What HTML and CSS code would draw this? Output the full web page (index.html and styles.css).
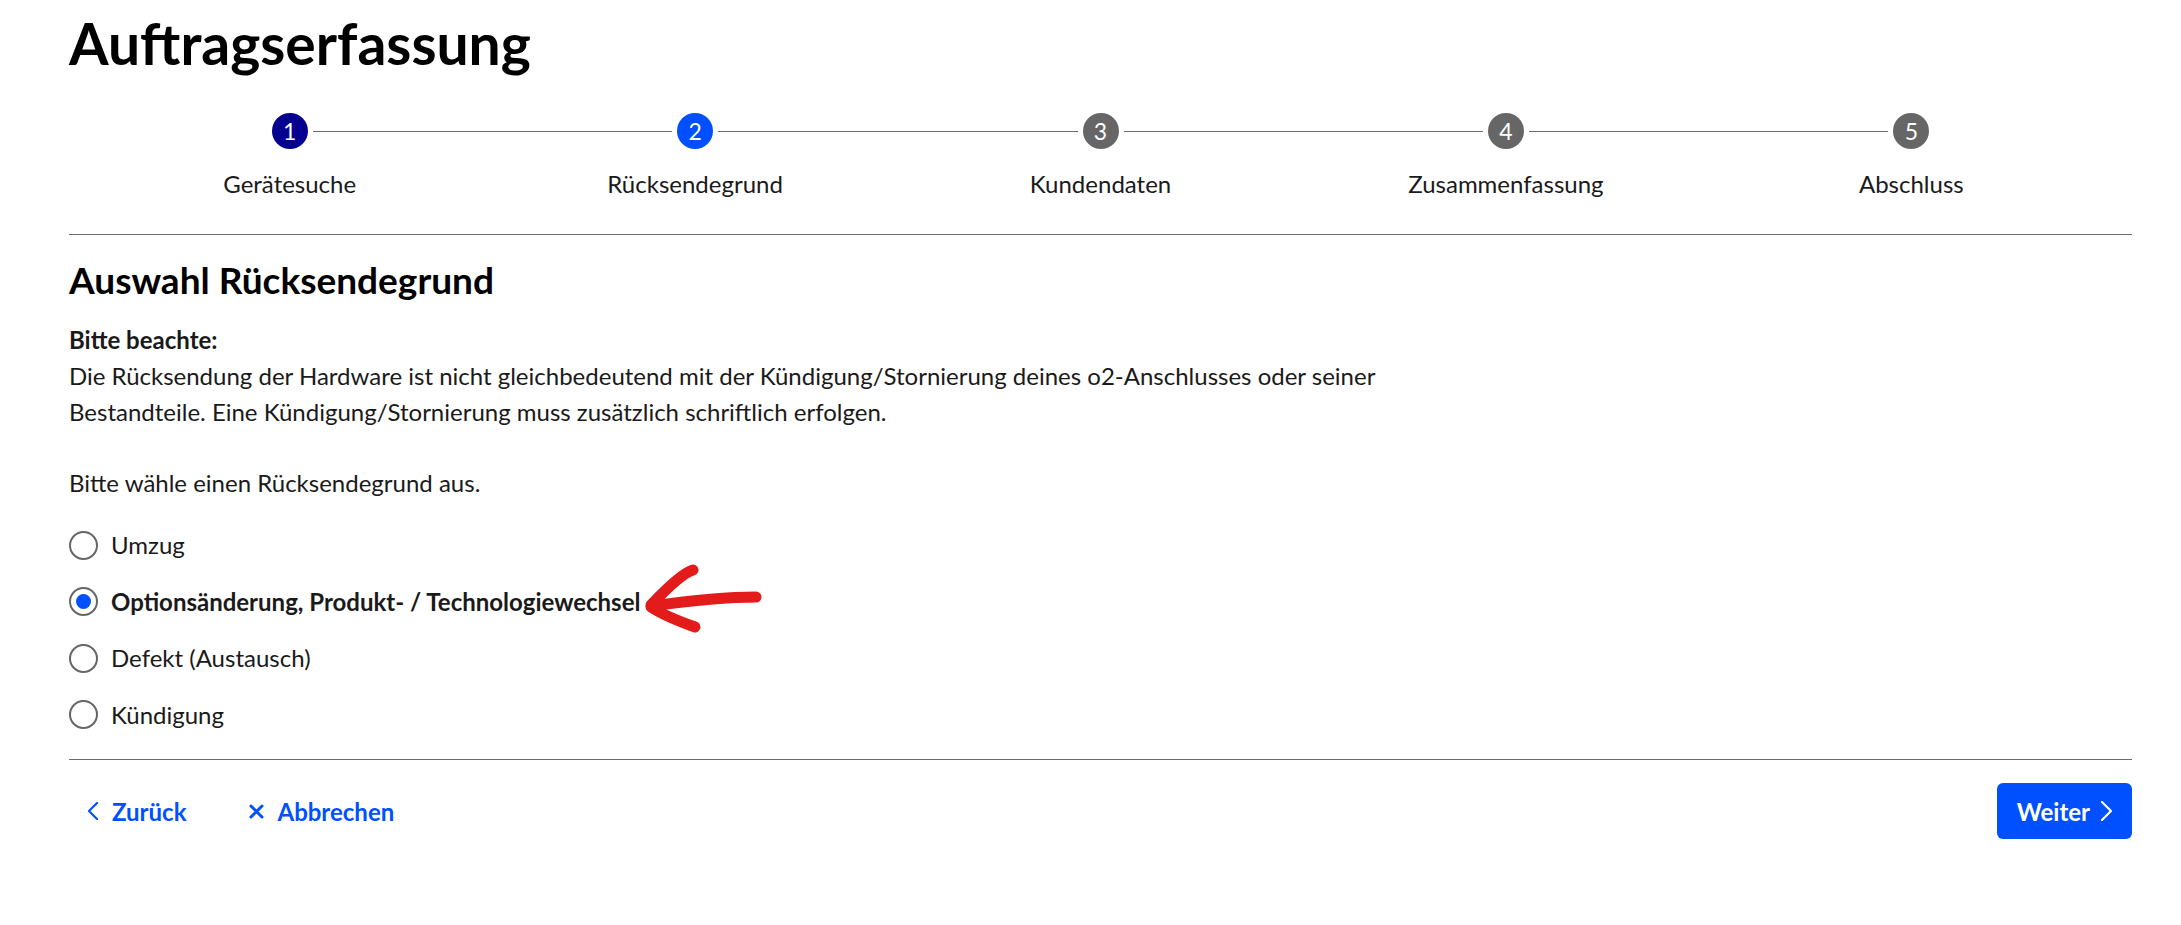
FILE: index.html
```html
<!DOCTYPE html>
<html lang="de">
<head>
    <meta charset="UTF-8">
    <meta name="viewport" content="width=device-width, initial-scale=1.0">
    <title>Auftragserfassung</title>
    <link rel="stylesheet" href="styles.css">
</head>
<body>
    <div class="page">
        <h1>Auftragserfassung</h1>

        <div class="stepper">
            <div class="step done">
                <div class="step-num">1</div>
                <div class="step-label">Gerätesuche</div>
            </div>
            <div class="step active">
                <div class="step-num">2</div>
                <div class="step-label">Rücksendegrund</div>
            </div>
            <div class="step">
                <div class="step-num">3</div>
                <div class="step-label">Kundendaten</div>
            </div>
            <div class="step">
                <div class="step-num">4</div>
                <div class="step-label">Zusammenfassung</div>
            </div>
            <div class="step last">
                <div class="step-num">5</div>
                <div class="step-label">Abschluss</div>
            </div>
        </div>

        <hr class="divider">

        <h2>Auswahl Rücksendegrund</h2>

        <div class="notice">
            <strong>Bitte beachte:</strong>
            <p>Die Rücksendung der Hardware ist nicht gleichbedeutend mit der Kündigung/Stornierung deines o2-Anschlusses oder seiner<br>Bestandteile. Eine Kündigung/Stornierung muss zusätzlich schriftlich erfolgen.</p>
        </div>

        <p class="prompt">Bitte wähle einen Rücksendegrund aus.</p>

        <div class="options">
            <label class="option">
                <input type="radio" name="reason" value="umzug">
                <span class="option-text">Umzug</span>
            </label>
            <label class="option selected">
                <input type="radio" name="reason" value="wechsel" checked>
                <span class="option-text">Optionsänderung, Produkt- / Technologiewechsel
                    <svg class="arrow" width="130" height="90" viewBox="0 0 130 90">
                        <path d="M118 40 C 90 40, 50 44, 14 49" />
                        <path d="M55 13 C 45 16, 30 30, 13 48" />
                        <path d="M13 50 C 25 58, 40 64, 57 70" />
                    </svg>
                </span>
            </label>
            <label class="option">
                <input type="radio" name="reason" value="defekt">
                <span class="option-text">Defekt (Austausch)</span>
            </label>
            <label class="option">
                <input type="radio" name="reason" value="kuendigung">
                <span class="option-text">Kündigung</span>
            </label>
        </div>

        <hr class="divider bottom">

        <div class="actions">
            <div class="actions-left">
                <a href="#" class="link">
                    <svg width="12" height="18" viewBox="0 0 12 18"><path d="M10 1 L2 9 L10 17" /></svg>
                    Zurück
                </a>
                <a href="#" class="link">
                    <svg width="15" height="15" viewBox="0 0 15 15"><path d="M2 2 L13 13 M13 2 L2 13" class="bold" /></svg>
                    Abbrechen
                </a>
            </div>
            <button class="btn-next">
                Weiter
                <svg width="13" height="20" viewBox="0 0 13 20"><path d="M2 1 L11 10 L2 19" /></svg>
            </button>
        </div>
    </div>
</body>
</html>
```

FILE: styles.css
```css
body {
    font-family: Lato, "Noto Sans", sans-serif;
    margin: 0;
    padding: 0;
    background-color: white;
    color: #1a1a1a;
}

.page {
    padding: 10px 49px 40px 69px;
}

h1 {
    margin: 0;
    font-size: 57px;
    line-height: 66px;
    font-weight: 700;
    color: black;
}

.stepper {
    display: flex;
    padding: 0 18px;
    margin-top: 37px;
}

.step {
    flex: 1;
    display: flex;
    flex-direction: column;
    align-items: center;
    position: relative;
}

.step::after {
    content: "";
    position: absolute;
    top: 18px;
    left: calc(50% + 23px);
    width: calc(100% - 46px);
    height: 1px;
    background-color: #6b6b6b;
}

.step.last::after {
    display: none;
}

.step-num {
    width: 36px;
    height: 36px;
    border-radius: 50%;
    background-color: #666;
    color: white;
    font-size: 23px;
    line-height: 36px;
    text-align: center;
}

.step.done .step-num {
    background-color: #05008f;
}

.step.active .step-num {
    background-color: #0050ff;
}

.step-label {
    margin-top: 20px;
    font-size: 24px;
    line-height: 30px;
    color: #1a1a1a;
}

.divider {
    border: none;
    border-top: 1px solid #6b6b6b;
    margin: 35px 0 0 0;
}

.divider.bottom {
    margin-top: 16px;
}

h2 {
    margin: 24px 0 0 0;
    font-size: 37px;
    line-height: 42px;
    font-weight: 700;
    color: black;
}

.notice {
    margin-top: 21px;
    font-size: 24px;
    line-height: 36px;
}

.notice p {
    margin: 0;
}

.prompt {
    margin: 35px 0 0 0;
    font-size: 24px;
    line-height: 36px;
}

.options {
    margin-top: 16px;
    display: flex;
    flex-direction: column;
}

.option {
    display: flex;
    align-items: center;
    gap: 13px;
    height: 56.5px;
    font-size: 24px;
    cursor: pointer;
}

.option input {
    appearance: none;
    -webkit-appearance: none;
    margin: 0;
    width: 29px;
    height: 29px;
    border: 2px solid #666;
    border-radius: 50%;
    display: flex;
    align-items: center;
    justify-content: center;
    flex-shrink: 0;
}

.option input:checked::after {
    content: "";
    width: 15px;
    height: 15px;
    border-radius: 50%;
    background-color: #0050ff;
}

.option-text {
    display: inline-block;
    position: relative;
    line-height: 36px;
}

.option.selected .option-text {
    font-weight: 700;
}

.arrow {
    position: absolute;
    left: calc(100% - 2px);
    top: -27px;
}

.arrow path {
    fill: none;
    stroke: #e31b1b;
    stroke-width: 11;
    stroke-linecap: round;
    stroke-linejoin: round;
}

.actions {
    margin-top: 23px;
    display: flex;
    align-items: center;
    justify-content: space-between;
}

.actions-left {
    display: flex;
    align-items: center;
    gap: 63px;
    padding-left: 18px;
}

.link {
    display: flex;
    align-items: center;
    gap: 13px;
    color: #0050ff;
    font-size: 24px;
    font-weight: 700;
    text-decoration: none;
}

.link svg path {
    fill: none;
    stroke: #0050ff;
    stroke-width: 2.2;
    stroke-linecap: round;
    stroke-linejoin: round;
}

.link svg path.bold {
    stroke-width: 3;
}

.btn-next {
    display: flex;
    align-items: center;
    gap: 10px;
    height: 56px;
    padding: 0 19px 0 20px;
    background-color: #0050ff;
    color: white;
    border: none;
    border-radius: 6px;
    font-family: inherit;
    font-size: 24px;
    font-weight: 700;
    cursor: pointer;
}

.btn-next svg path {
    fill: none;
    stroke: white;
    stroke-width: 2.2;
    stroke-linecap: round;
    stroke-linejoin: round;
}
```
